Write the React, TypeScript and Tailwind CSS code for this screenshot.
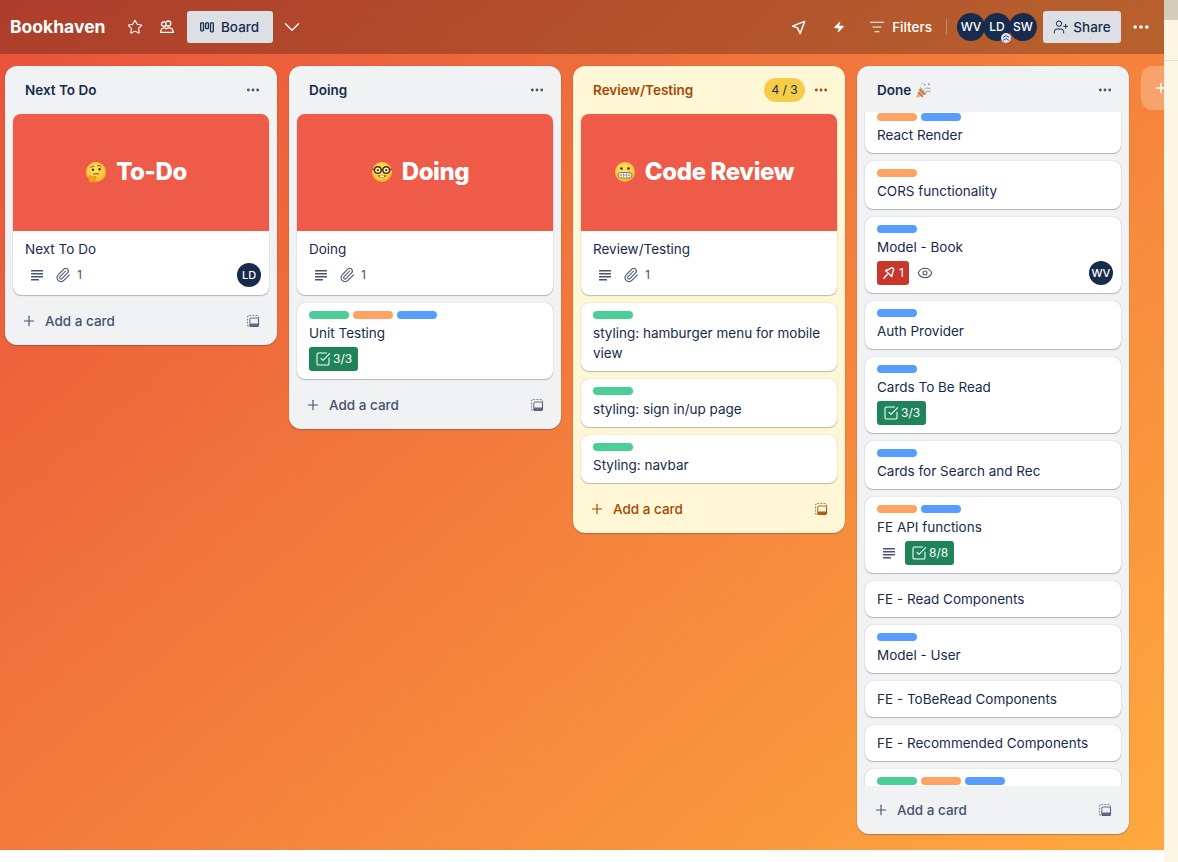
import type { ReactNode } from "react";
import { ChevronDown, Ellipsis, Eye, ListFilter, Paperclip, Plus, SquareCheckBig, Star, UserPlus, Zap } from "lucide-react";

type LabelColor = "green" | "orange" | "blue";

type CardData = {
  title: string;
  labels?: LabelColor[];
  desc?: boolean;
  attach?: boolean;
  check?: string;
  pin?: boolean;
  watch?: boolean;
  member?: string;
  cover?: { emoji: ReactNode; text: string };
};

const LABEL_CLASS: Record<LabelColor, string> = {
  green: "bg-[#4bce97]",
  orange: "bg-[#fea362]",
  blue: "bg-[#579dff]",
};

function LinesIcon() {
  return (
    <svg width="16" height="16" viewBox="0 0 16 16" className="text-[#44546f]" fill="currentColor">
      <rect x="2" y="3" width="12" height="1.4" rx=".5" />
      <rect x="2" y="6" width="12" height="1.4" rx=".5" />
      <rect x="2" y="9" width="12" height="1.4" rx=".5" />
      <rect x="2" y="12" width="8" height="1.4" rx=".5" />
    </svg>
  );
}

function TemplateIcon() {
  return (
    <svg width="16" height="16" viewBox="0 0 16 16" fill="none" stroke="currentColor">
      <rect x="2.500" y="2.500" width="11" height="11" rx="1.800" strokeWidth="1.100" strokeDasharray="1.800 1.300" opacity=".7" />
      <rect x="4.800" y="5" width="8.700" height="8.500" rx="1.200" strokeWidth="1.100" opacity=".8" />
      <rect x="4.800" y="10.500" width="8.700" height="3" rx="1" fill="currentColor" stroke="none" opacity=".85" />
    </svg>
  );
}

function PinIcon() {
  return (
    <svg width="16" height="16" viewBox="0 0 16 16" fill="none" stroke="currentColor" strokeWidth="1.400" strokeLinejoin="round" strokeLinecap="round">
      <path d="M10.300 2.800c1.300-.4 2.600.9 2.300 2.200L11.300 8.800l-.6 2.700-6.200-6 2.600-.7Z" />
      <path d="M6.200 9.600 2.800 13.200" />
    </svg>
  );
}

function BoardIcon() {
  return (
    <svg width="14" height="14" viewBox="0 0 14 14" fill="none" stroke="currentColor" strokeWidth="1.300">
      <rect x=".7" y="2.800" width="2.800" height="8" rx=".7" />
      <rect x="5.600" y="2.800" width="2.800" height="5.800" rx=".7" />
      <rect x="10.500" y="2.800" width="2.800" height="9" rx=".7" />
    </svg>
  );
}

function TeamIcon() {
  return (
    <svg width="16" height="16" viewBox="0 0 16 16" fill="none" stroke="currentColor" strokeWidth="1.300" strokeLinejoin="round">
      <circle cx="9.200" cy="4.600" r="2.600" />
      <path d="M1.600 13.400c0-2.600 1.600-4.600 3.600-4.600 1 0 1.600.3 2.200.9.700-.6 1.500-.9 2.500-.9 2.200 0 4.300 1.600 4.500 4.600Z" />
      <path d="M6.700 6.500A2.300 2.300 0 1 1 6 3.100" />
    </svg>
  );
}

function PlaneIcon() {
  return (
    <svg width="15" height="15" viewBox="0 0 16 16" fill="none" stroke="currentColor" strokeWidth="1.600" strokeLinejoin="round">
      <path d="M14.500 1.500 1.500 6.500 6.800 8.200 9.800 14.500Z" />
    </svg>
  );
}

function Face({ id, children }: { id: string; children: ReactNode }) {
  return (
    <svg width="22" height="22" viewBox="0 0 22 22">
      <defs>
        <radialGradient id={id} cx=".45" cy=".35" r=".75">
          <stop offset="0" stopColor="#ffe46b" />
          <stop offset=".7" stopColor="#fcc332" />
          <stop offset="1" stopColor="#ee9a1e" />
        </radialGradient>
      </defs>
      <circle cx="11" cy="11" r="10" fill={`url(#${id})`} />
      {children}
    </svg>
  );
}

const thinking = (
  <Face id="think">
    <path d="M5.500 6.500c1-1.300 2.500-1.500 3.700-.9M12.500 4.800c1.300-.6 2.900-.3 3.800.9" fill="none" stroke="#7a4a12" strokeWidth="1" strokeLinecap="round" />
    <circle cx="8" cy="8.800" r="1.200" fill="#4a2c0e" />
    <circle cx="14.500" cy="8.200" r="1.200" fill="#4a2c0e" />
    <path d="M8.500 13.200c1.500-.8 3.300-.8 5.200-.2" fill="none" stroke="#7a4a12" strokeWidth="1" strokeLinecap="round" />
    <path d="M4.500 21c-1-1.500-1.200-3.500-.8-5.200.4-1.200 1.200-1.700 1.800-1.200l.8 1.500 4.200-.8c1-.1 1.300 1.300.3 1.600l-.8.300c.7.800.5 2.400-.5 3.200C8.200 21.500 5.800 22 4.500 21Z" fill="#f59f1b" stroke="#c9770e" strokeWidth=".4" />
  </Face>
);

const nerd = (
  <Face id="nerd">
    <circle cx="6.800" cy="9" r="3.300" fill="#fff3c4" stroke="#4a3213" strokeWidth="1.400" />
    <circle cx="15.200" cy="9" r="3.300" fill="#fff3c4" stroke="#4a3213" strokeWidth="1.400" />
    <path d="M10 9h2M1.500 8.500h2M18.500 8.500h2" stroke="#4a3213" strokeWidth="1.300" />
    <circle cx="6.800" cy="9.200" r="1.100" fill="#4a2c0e" />
    <circle cx="15.200" cy="9.200" r="1.100" fill="#4a2c0e" />
    <path d="M6.500 14.500c2.800 2.600 6.200 2.600 9 0Z" fill="#6b3a12" />
    <rect x="9" y="14.500" width="4" height="1.600" fill="#fff" />
  </Face>
);

const grimace = (
  <Face id="grim">
    <circle cx="7.500" cy="7.500" r="1.300" fill="#4a2c0e" />
    <circle cx="14.500" cy="7.500" r="1.300" fill="#4a2c0e" />
    <rect x="4" y="11.500" width="14" height="5.500" rx="2.700" fill="#f4f4f4" stroke="#6b5a3a" strokeWidth=".7" />
    <path d="M4.200 14.200h13.600M7 11.800v5M9.500 11.800v5M12.500 11.800v5M15 11.800v5" stroke="#8a8a8a" strokeWidth=".6" />
  </Face>
);

function PartyPopper() {
  return (
    <svg width="17" height="17" viewBox="0 0 16 16">
      <path d="M1 15 5 4.500 11.500 11Z" fill="#f5b32f" />
      <path d="M3 9.800 7.500 14M4.300 6.800 9.500 12" stroke="#a466d8" strokeWidth="1.300" />
      <circle cx="9" cy="2.500" r=".8" fill="#3fa7e0" />
      <circle cx="13" cy="2" r=".8" fill="#e0559a" />
      <circle cx="14" cy="6" r=".8" fill="#f5b32f" />
      <path d="M9 6.500c1-.8 2.500-1.200 4-.5M10.500 9c1-.4 2.500-.4 4 .3" fill="none" stroke="#5a9be0" strokeWidth=".9" />
      <circle cx="6.500" cy="1.500" r=".6" fill="#6dbb5a" />
    </svg>
  );
}

const coverCard = (title: string, emoji: ReactNode, text: string, member?: string): CardData => ({
  title,
  desc: true,
  attach: true,
  member,
  cover: { emoji, text },
});

const doneCards: CardData[] = [
  { title: "React Render", labels: ["orange", "blue"] },
  { title: "CORS functionality", labels: ["orange"] },
  { title: "Model - Book", labels: ["blue"], pin: true, watch: true, member: "WV" },
  { title: "Auth Provider", labels: ["blue"] },
  { title: "Cards To Be Read", labels: ["blue"], check: "3/3" },
  { title: "Cards for Search and Rec", labels: ["blue"] },
  { title: "FE API functions", labels: ["orange", "blue"], desc: true, check: "8/8" },
  { title: "FE - Read Components" },
  { title: "Model - User", labels: ["blue"] },
  { title: "FE - ToBeRead Components" },
  { title: "FE - Recommended Components" },
  // cut off by the scroll area, only its labels show
  { title: "", labels: ["green", "orange", "blue"] },
];

function Card({ card }: { card: CardData }) {
  const hasBadges = card.desc || card.attach || card.check || card.pin || card.watch || card.member;
  return (
    <div className="shrink-0 overflow-hidden rounded-lg bg-white shadow-[0_1px_1px_#091e4240,0_0_1px_#091e424f]">
      {card.cover && (
        <div className="flex h-[117px] items-center justify-center gap-[9px] bg-[#ee5b48] pr-2.5 pb-0.5 text-2xl font-extrabold tracking-[-0.4px] text-white">
          {card.cover.emoji}
          <span>{card.cover.text}</span>
        </div>
      )}
      <div className="px-3 py-2">
        {card.labels && (
          <div className="mb-1 flex gap-1">
            {card.labels.map((c) => (
              <span key={c} className={`h-2 w-10 rounded ${LABEL_CLASS[c]}`} />
            ))}
          </div>
        )}
        <div className="min-h-5 text-[13.5px] leading-5 text-[#172b4d]">{card.title}</div>
        {hasBadges && (
          <div className="mt-1 flex h-6 items-center gap-1">
            {card.pin && (
              <span className="flex h-6 w-8 items-center gap-0.5 rounded-[3px] bg-[#c9372c] pl-1 text-xs text-white">
                <PinIcon />1
              </span>
            )}
            {card.watch && (
              <span className="flex h-6 w-6 items-center justify-center text-[#44546f]">
                <Eye size={16} strokeWidth={1.6} />
              </span>
            )}
            {card.desc && (
              <span className="flex h-6 w-6 items-center justify-center">
                <LinesIcon />
              </span>
            )}
            {card.attach && (
              <span className="ml-0.5 flex h-6 items-center gap-1.5 text-xs text-[#44546f]">
                <Paperclip size={16} strokeWidth={1.6} />1
              </span>
            )}
            {card.check && (
              <span className="flex h-6 items-center gap-0.5 rounded-[3px] bg-[#1f845a] px-1.5 text-xs text-white">
                <SquareCheckBig size={16} strokeWidth={1.6} />
                {card.check}
              </span>
            )}
            {card.member && (
              <span className="-mr-1 ml-auto flex h-6 w-6 items-center justify-center rounded-full bg-[#172b4d] text-[11px] font-medium text-white">
                {card.member}
              </span>
            )}
          </div>
        )}
      </div>
    </div>
  );
}

function List({
  title,
  cards,
  count,
  warn,
  scrollH,
  titleExtra,
}: {
  title: string;
  cards: CardData[];
  count?: string;
  warn?: boolean;
  scrollH?: boolean;
  titleExtra?: ReactNode;
}) {
  return (
    <div
      className={`flex w-[272px] shrink-0 flex-col self-start rounded-xl shadow-[0_1px_1px_#091e4240,0_0_1px_#091e424f] ${
        warn ? "bg-[#fff7d6]" : "bg-[#f1f2f4]"
      }`}
    >
      <div className="flex h-[46px] shrink-0 items-center pt-0.5 pr-2 pl-5">
        <h2 className={`flex items-center gap-1 text-[13.5px] font-semibold ${warn ? "text-[#a54800]" : "text-[#172b4d]"}`}>
          {title}
          {titleExtra}
        </h2>
        {count && (
          <span className="ml-auto flex h-6 w-[41px] items-center justify-center rounded-full bg-[#f5cd47] text-xs text-[#172b4d]">
            {count}
          </span>
        )}
        <span className={`flex h-8 w-8 items-center justify-center ${count ? "" : "ml-auto"} ${warn ? "text-[#a54800]" : "text-[#44546f]"}`}>
          <Ellipsis size={16} strokeWidth={2.2} />
        </span>
      </div>
      <div className={`overflow-hidden px-2 ${scrollH ? "h-[674px]" : "pt-0.5 pb-0.5"}`}>
        <div className={`flex flex-col gap-2 ${scrollH ? "-mt-[7px]" : ""}`}>
          {cards.map((card) => (
            <Card key={card.title} card={card} />
          ))}
        </div>
      </div>
      <div className={`flex h-12 shrink-0 items-center px-4 text-[13.5px] font-medium ${warn ? "text-[#a54800]" : "text-[#44546f]"}`}>
        <Plus size={16} strokeWidth={1.7} />
        <span className="ml-2 flex-1">Add a card</span>
        <TemplateIcon />
      </div>
    </div>
  );
}

function Avatar({ initials, badge }: { initials: string; badge?: boolean }) {
  return (
    <span className="relative -ml-0.5 flex h-7 w-7 items-center justify-center rounded-full bg-[#172b4d] text-xs font-medium text-white first:ml-0">
      {initials}
      {badge && (
        <span className="absolute right-0 -bottom-0.5 flex h-[10px] w-[10px] items-center justify-center rounded-full bg-[#dfe1f5]">
          <svg width="8" height="8" viewBox="0 0 8 8" fill="none" stroke="#3f4fb5" strokeWidth="1">
            <path d="M1 3.500 4 1.500 7 3.500M1 6.500 4 4.500 7 6.500" />
          </svg>
        </span>
      )}
    </span>
  );
}

export default function App() {
  return (
    <div className="flex h-[862px] w-[1178px] overflow-hidden bg-white font-['Inter',sans-serif]">
      <main className="flex h-[850px] w-[1164px] shrink-0 flex-col overflow-hidden bg-[linear-gradient(140deg,#e8523a,#fea93f)]">
        <header className="flex h-[54px] shrink-0 items-center bg-black/25 text-white">
          <h1 className="ml-2.5 w-[95px] text-[17.5px] font-bold">Bookhaven</h1>
          <Star size={16} strokeWidth={1.6} className="ml-[22px]" />
          <span className="ml-4">
            <TeamIcon />
          </span>
          <button className="ml-3 flex h-8 w-[86px] items-center rounded-[3px] bg-[#dcdfe4] pl-[13px] text-[13.5px] font-medium text-[#172b4d]">
            <BoardIcon />
            <span className="ml-[7px]">Board</span>
          </button>
          <ChevronDown size={26} strokeWidth={1.3} className="ml-1.5" />

          <div className="ml-auto flex items-center">
            <PlaneIcon />
            <Zap size={12} fill="currentColor" strokeWidth={1} className="ml-[27px]" />
            <ListFilter size={16} strokeWidth={1.6} className="ml-[24px]" />
            <span className="ml-[7px] text-[13.5px] font-medium">Filters</span>
            <span className="mr-2.5 ml-[14px] h-4 w-px bg-white/30" />
            <div className="flex">
              <Avatar initials="WV" />
              <Avatar initials="LD" badge />
              <Avatar initials="SW" />
            </div>
            <button className="ml-1.5 flex h-8 w-[78px] items-center justify-center gap-1 rounded-[3px] bg-[#dcdfe4] text-[13.5px] font-medium text-[#172b4d]">
              <UserPlus size={16} strokeWidth={1.5} />
              Share
            </button>
            <Ellipsis size={20} strokeWidth={2.4} className="mr-[13px] ml-[10px]" />
          </div>
        </header>

        <div className="flex min-h-0 flex-1 gap-3 pt-3 pl-[5px]">
          <List title="Next To Do" cards={[coverCard("Next To Do", thinking, "To-Do", "LD")]} />
          <List
            title="Doing"
            cards={[
              coverCard("Doing", nerd, "Doing"),
              { title: "Unit Testing", labels: ["green", "orange", "blue"], check: "3/3" },
            ]}
          />
          <List
            title="Review/Testing"
            warn
            count="4 / 3"
            cards={[
              coverCard("Review/Testing", grimace, "Code Review"),
              { title: "styling: hamburger menu for mobile view", labels: ["green"] },
              { title: "styling: sign in/up page", labels: ["green"] },
              { title: "Styling: navbar", labels: ["green"] },
            ]}
          />
          <List title="Done" cards={doneCards} scrollH titleExtra={<PartyPopper />} />
          <div className="flex h-11 w-[272px] shrink-0 items-center rounded-xl bg-white/25 pl-3 text-white">
            <Plus size={16} />
          </div>
        </div>
      </main>
      <aside className="flex-1 bg-[#fef6e4]">
        <div className="h-5 bg-[#d5cdbb]" />
        <div className="mt-10 h-px bg-[#e3ded2]" />
      </aside>
    </div>
  );
}
